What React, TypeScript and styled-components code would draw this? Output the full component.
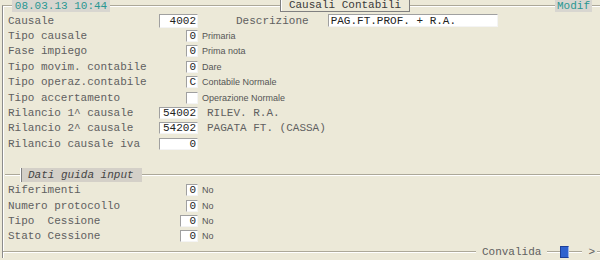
import React from "react";
import styled, { createGlobalStyle } from "styled-components";

const mono = `"Liberation Mono", "Courier New", monospace`;
const sans = `"Liberation Sans", Arial, sans-serif`;

const GlobalStyle = createGlobalStyle`
  html, body {
    margin: 0;
    padding: 0;
    background: #ece9d8;
  }
`;

interface FieldRow {
  label: string;
  value: string;
  w: number;
  desc?: string;
  code?: string;
}

const upperRows: FieldRow[] = [
  { label: "Tipo causale", value: "0", w: 12, desc: "Primaria" },
  { label: "Fase impiego", value: "0", w: 12, desc: "Prima nota" },
  { label: "Tipo movim. contabile", value: "0", w: 12, desc: "Dare" },
  { label: "Tipo operaz.contabile", value: "C", w: 12, desc: "Contabile Normale" },
  { label: "Tipo accertamento", value: "", w: 12, desc: "Operazione Normale" },
  { label: "Rilancio 1^ causale", value: "54002", w: 39, code: "RILEV. R.A." },
  { label: "Rilancio 2^ causale", value: "54202", w: 39, code: "PAGATA FT. (CASSA)" },
  { label: "Rilancio causale iva", value: "0", w: 39 },
];

const lowerRows: FieldRow[] = [
  { label: "Riferimenti", value: "0", w: 12, desc: "No" },
  { label: "Numero protocollo", value: "0", w: 12, desc: "No" },
  { label: "Tipo  Cessione", value: "0", w: 18, desc: "No" },
  { label: "Stato Cessione", value: "0", w: 18, desc: "No" },
];

const App = () => {
  const renderRow = (r: FieldRow) => (
    <Row key={r.label}>
      <Label>{r.label}</Label>
      <InputCell>
        <Field $w={r.w}>{r.value}</Field>
      </InputCell>
      {r.desc && <Desc>{r.desc}</Desc>}
      {r.code && <CodeDesc>{r.code}</CodeDesc>}
    </Row>
  );

  return (
    <Screen>
      <GlobalStyle />
      <Header>
        <Corner />
        <Chip $w={98}>08.03.13 10:44</Chip>
        <Etch $w={170} />
        <TitleTab>Causali Contabili</TitleTab>
        <Etch />
        <Chip $w={37}>Modif</Chip>
        <Etch $w={8} />
      </Header>

      <Frame>
        <Row>
          <Label>Causale</Label>
          <InputCell>
            <Field $w={39} $h={14}>4002</Field>
          </InputCell>
          <DescLabel>Descrizione</DescLabel>
          <Field $w={170} $h={13} $left>
            PAG.FT.PROF. + R.A.
          </Field>
        </Row>
        {upperRows.map(renderRow)}

        <Divider>
          <Etch $w={15} $flat />
          <SectionTab>Dati guida input</SectionTab>
          <Etch $flat />
        </Divider>

        {lowerRows.map(renderRow)}

        <Footer>
          <Etch $flat $pull />
          <FooterText>Convalida</FooterText>
          <Etch $w={13} $flat />
          <StatusBox />
          <Etch $w={13} $flat />
          <FooterText $tight>&gt;</FooterText>
          <Etch $w={3} $flat />
        </Footer>
      </Frame>
    </Screen>
  );
};

const Screen = styled.div`
  width: 600px;
  height: 260px;
  overflow: hidden;
  display: flex;
  flex-direction: column;
  background: #ece9d8;
  font-family: ${mono};
  font-size: 11px;
  color: #606060;
`;

const Header = styled.div`
  display: flex;
  align-items: flex-start;
  height: 13px;
  flex-shrink: 0;
`;

const Etch = styled.div<{ $w?: number; $flat?: boolean; $pull?: boolean }>`
  flex: ${(p) => (p.$w ? `0 0 ${p.$w}px` : "1")};
  height: 0;
  margin-top: ${(p) => (p.$flat ? "0" : "5px")};
  margin-left: ${(p) => (p.$pull ? "-5px" : "0")};
  border-top: 1px solid #aca899;
  border-bottom: 1px solid #fff;
`;

const Corner = styled.div`
  flex: 0 0 10px;
  height: 8px;
  margin: 5px 0 0 2px;
  box-sizing: border-box;
  border-top: 1px solid #aca899;
  border-left: 1px solid #8c8c8c;
  box-shadow: inset 1px 1px #fff;
`;

const Chip = styled.div<{ $w: number }>`
  flex: 0 0 ${(p) => p.$w}px;
  height: 12px;
  line-height: 12px;
  background: #d8d6d0;
  color: #2a9692;
  text-align: center;
  white-space: pre;
`;

const TitleTab = styled.div`
  flex: 0 0 130px;
  height: 12px;
  box-sizing: border-box;
  border: 1px solid #808080;
  border-top: none;
  box-shadow: inset 1px 0 #fff;
  line-height: 11px;
  text-align: center;
  color: #3a3a3a;
  white-space: pre;
`;

const Frame = styled.div`
  flex: 1;
  display: flex;
  flex-direction: column;
  margin: 0 0 2px 2px;
  padding-left: 5px;
  border-left: 1px solid #8c8c8c;
  box-shadow: inset 1px 0 #fff;
`;

const Row = styled.div`
  display: flex;
  align-items: center;
  height: 15.4px;
  flex-shrink: 0;
`;

const Label = styled.span`
  flex: 0 0 151px;
  white-space: pre;
`;

const InputCell = styled.div`
  flex: 0 0 39px;
  display: flex;
  justify-content: flex-end;
`;

const Field = styled.div<{ $w: number; $h?: number; $left?: boolean }>`
  width: ${(p) => p.$w}px;
  height: ${(p) => p.$h ?? 12}px;
  box-sizing: border-box;
  flex-shrink: 0;
  background: #fff;
  border-top: 1px solid #a0a0a0;
  border-left: 1px solid #a0a0a0;
  border-right: 1px solid #f4f4f4;
  border-bottom: 1px solid #f4f4f4;
  padding: ${(p) => (p.$left ? "0 0 0 2px" : "0 1px 0 0")};
  text-align: ${(p) => (p.$left ? "left" : "right")};
  line-height: ${(p) => (p.$h ?? 12) - 1}px;
  color: #222;
  white-space: pre;
  overflow: hidden;
`;

const Desc = styled.span`
  margin-left: 4px;
  font-family: ${sans};
  font-size: 9px;
  color: #555;
  white-space: pre;
`;

const CodeDesc = styled.span`
  margin-left: 9px;
  white-space: pre;
`;

const DescLabel = styled.span`
  margin: 0 19px 0 38px;
  white-space: pre;
`;

const Divider = styled.div`
  display: flex;
  align-items: center;
  height: 14px;
  margin: 16px 0 1px -3px;
  flex-shrink: 0;
`;

const SectionTab = styled.div`
  flex: 0 0 122px;
  height: 14px;
  box-sizing: border-box;
  background: #d4d0c8;
  border-left: 1px solid #fff;
  box-shadow: inset 1px 0 #808080;
  padding-left: 7px;
  line-height: 14px;
  font-style: italic;
  color: #444;
  white-space: pre;
`;

const Footer = styled.div`
  display: flex;
  align-items: center;
  height: 12px;
  margin-top: auto;
  flex-shrink: 0;
`;

const FooterText = styled.span<{ $tight?: boolean }>`
  margin: ${(p) => (p.$tight ? "0 2px 0 6px" : "0 6px")};
  white-space: pre;
`;

const StatusBox = styled.div`
  flex: 0 0 9px;
  height: 12px;
  box-sizing: border-box;
  background: #2f62cf;
  border: 1px solid #1d3f98;
  border-right-color: #9db4e8;
`;

export default App;
